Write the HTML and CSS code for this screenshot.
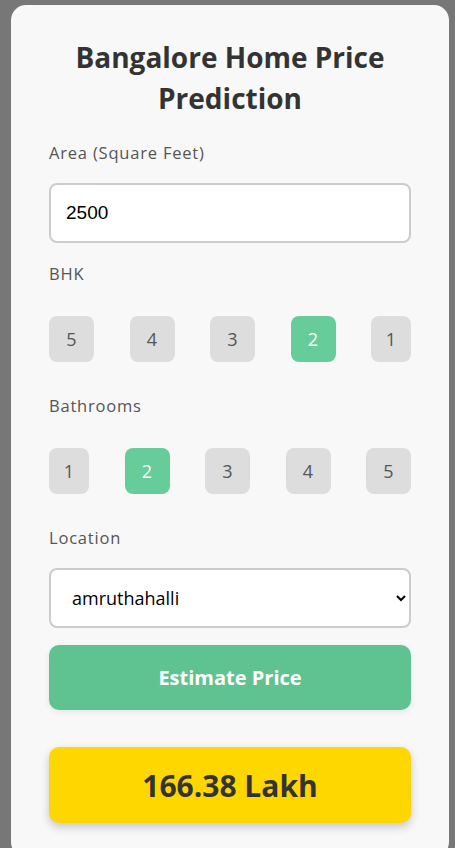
FILE: index.html
```html
<!DOCTYPE html>
<html lang="en">
<head>
<meta charset="utf-8">
<title>Bangalore Home Price Prediction</title>
<link rel="stylesheet" href="styles.css">
</head>
<body>
  <main class="card">
    <h1 class="title">Bangalore Home Price Prediction</h1>

    <div class="field field-first">
      <label class="label" for="area">Area (Square Feet)</label>
      <input class="text-input" id="area" type="text" value="2500">
    </div>

    <div class="field field-after-input">
      <span class="label label-options">BHK</span>
      <div class="options">
        <button class="opt">5</button>
        <button class="opt">4</button>
        <button class="opt">3</button>
        <button class="opt opt-active">2</button>
        <button class="opt opt-one">1</button>
      </div>
    </div>

    <div class="field field-after-options">
      <span class="label label-options">Bathrooms</span>
      <div class="options">
        <button class="opt opt-one">1</button>
        <button class="opt opt-active">2</button>
        <button class="opt">3</button>
        <button class="opt">4</button>
        <button class="opt">5</button>
      </div>
    </div>

    <div class="field field-after-options">
      <label class="label" for="loc">Location</label>
      <select class="select" id="loc">
        <option>amruthahalli</option>
      </select>
    </div>

    <button class="estimate">Estimate Price</button>

    <div class="result">166.38 Lakh</div>
  </main>
</body>
</html>
```

FILE: styles.css
```css
html, body {
  margin: 0;
  padding: 0;
  height: 100%;
  overflow: hidden;
}

body {
  background: #777777;
  font-family: "Open Sans", "Liberation Sans", sans-serif;
  padding-top: 5px;
  box-sizing: border-box;
}

.card {
  margin-left: 11px;
  width: 438px;
  box-sizing: border-box;
  background: #f8f8f8;
  border-radius: 15px;
  padding: 32px 38px 34px;
  display: flex;
  flex-direction: column;
}

.title {
  margin: 0;
  font-size: 28px;
  line-height: 41px;
  font-weight: 700;
  color: #333333;
  text-align: center;
}

.field {
  display: flex;
  flex-direction: column;
}

.field-first { margin-top: 22px; }
.field-after-input { margin-top: 19px; }
.field-after-options { margin-top: 32px; }

.label {
  font-size: 16.5px;
  line-height: 24px;
  letter-spacing: 0.8px;
  color: #555555;
  margin-bottom: 18px;
}

.label-options {
  margin-bottom: 30px;
}

.text-input {
  height: 60px;
  box-sizing: border-box;
  border: 2px solid #cccccc;
  border-radius: 8px;
  background: #ffffff;
  padding: 0 15px;
  font-family: "Liberation Sans", Arial, sans-serif;
  font-size: 19px;
  color: #000000;
  outline: none;
}

.options {
  display: flex;
  justify-content: space-between;
}

.opt {
  height: 46px;
  min-width: 45px;
  padding: 0 14px;
  border: none;
  border-radius: 8px;
  background: #dddddd;
  color: #555555;
  font-family: "Open Sans", "Liberation Sans", sans-serif;
  font-size: 18px;
}

.opt-one {
  min-width: 40px;
}

.opt-active {
  background: #66cc99;
  color: #ffffff;
}

.select {
  height: 60px;
  box-sizing: border-box;
  border: 2px solid #cccccc;
  border-radius: 8px;
  background: #ffffff;
  padding: 0 15px 0 17px;
  font-family: "Open Sans", "Liberation Sans", sans-serif;
  font-size: 18px;
  color: #000000;
}

.estimate {
  margin-top: 17px;
  height: 65px;
  border: none;
  border-radius: 10px;
  background: #5fc391;
  color: #ffffff;
  font-family: "Open Sans", "Liberation Sans", sans-serif;
  font-size: 20px;
  font-weight: 700;
  box-shadow: 0 2px 6px rgba(0, 0, 0, 0.08);
}

.result {
  margin-top: 37px;
  height: 76px;
  border-radius: 10px;
  background: #ffd700;
  color: #333333;
  font-size: 30px;
  font-weight: 700;
  display: flex;
  align-items: center;
  justify-content: center;
  box-shadow: 0 4px 10px rgba(0, 0, 0, 0.2);
}
```
